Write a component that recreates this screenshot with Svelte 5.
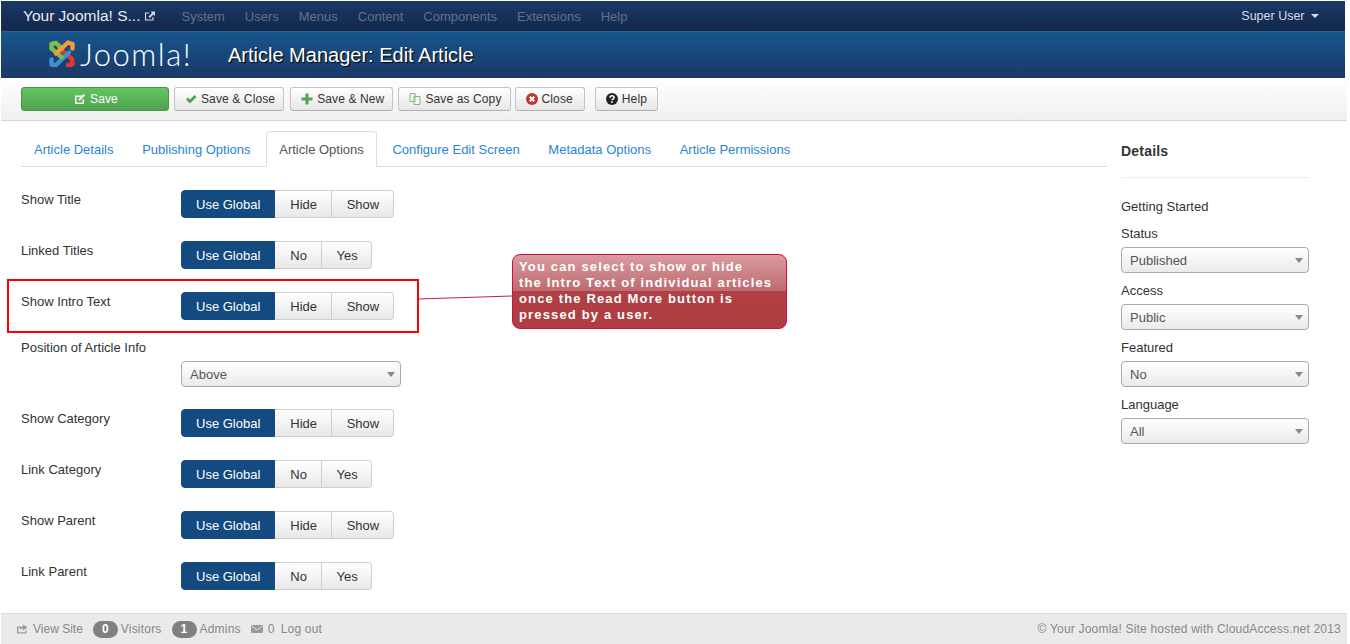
<script>
	const menus = ['System', 'Users', 'Menus', 'Content', 'Components', 'Extensions', 'Help'];
	const tabs = [
		'Article Details',
		'Publishing Options',
		'Article Options',
		'Configure Edit Screen',
		'Metadata Options',
		'Article Permissions'
	];
	const activeTab = 'Article Options';
	const hideShow = ['Hide', 'Show'];
	const noYes = ['No', 'Yes'];
	const rowsTop = [
		{ label: 'Show Title', options: hideShow },
		{ label: 'Linked Titles', options: noYes },
		{ label: 'Show Intro Text', options: hideShow }
	];
	const rowsBottom = [
		{ label: 'Show Category', options: hideShow },
		{ label: 'Link Category', options: noYes },
		{ label: 'Show Parent', options: hideShow },
		{ label: 'Link Parent', options: noYes }
	];
	const sideFields = [
		{ label: 'Status', value: 'Published' },
		{ label: 'Access', value: 'Public' },
		{ label: 'Featured', value: 'No' },
		{ label: 'Language', value: 'All' }
	];
</script>

{#snippet toggleRow(row)}
	<div class="row">
		<span class="row-label">{row.label}</span>
		<div class="btn-group">
			<span class="seg active">Use Global</span>
			{#each row.options as option}
				<span class="seg">{option}</span>
			{/each}
		</div>
	</div>
{/snippet}

<div class="page">
	<nav class="navbar">
		<span class="brand">Your Joomla! S...</span>
		<svg class="ext" viewBox="0 0 12 12" width="12" height="12">
			<path d="M9 7v3H1.500V3H5" fill="none" stroke="#d5dce6" stroke-width="1.100" />
			<path d="M6.500 1.500h4.500V6L9.400 4.500 5.800 8 4.500 6.700 8 3.100z" fill="#d5dce6" />
		</svg>
		<ul class="menu">
			{#each menus as item}
				<li>{item}</li>
			{/each}
		</ul>
		<span class="user">Super User <i class="caret"></i></span>
	</nav>

	<header class="header">
		<div class="logo">
			<svg viewBox="0 0 30 30" width="30" height="30">
				<g fill="none" stroke-width="4.400" stroke-linecap="round" stroke-linejoin="round">
					<path d="M25 25.500 21 26 M25.500 25 25 20 12 9" stroke="#e8352e" />
					<path d="M4.500 25.500 9 26 22 13.500 M4.500 25.500V20.500" stroke="#3f8fd2" />
					<path d="M4.500 5 9 4 15 9.500 M4.500 5V9.500L14.500 18" stroke="#7ac143" />
					<path d="M25.500 5 21 3.500 9 14.500 M25.500 5V9.500" stroke="#f59a3d" />
				</g>
			</svg>
			<span class="wordmark">Joomla!</span>
		</div>
		<h1>Article Manager: Edit Article</h1>
	</header>

	<div class="toolbar">
		<button class="btn save">
			<svg viewBox="0 0 12 12" width="12" height="12">
				<path d="M1 2.500h7L6.500 4H2.500v5.500h6V7L10 5.500V11H1z" fill="#fff" />
				<path d="M4.500 6 9.500 1 11 2.500 6 7.500H4.500z" fill="#fff" />
			</svg>
			Save
		</button>
		<button class="btn save-close">
			<svg viewBox="0 0 12 12" width="12" height="12">
				<path d="M1 6.500 3 4.500 5 6.500 9.500 2 11.500 4 5 10.500z" fill="#51a351" />
			</svg>
			Save &amp; Close
		</button>
		<button class="btn">
			<svg viewBox="0 0 12 12" width="12" height="12">
				<path d="M4.500 0.500h3v4h4v3h-4v4h-3v-4h-4v-3h4z" fill="#51a351" />
			</svg>
			Save &amp; New
		</button>
		<button class="btn save-copy">
			<svg viewBox="0 0 12 12" width="12" height="12">
				<path d="M1 .5h5v8H1zM5 3.500h6v8H5z" fill="#f4f4f4" stroke="#7fb97f" />
			</svg>
			Save as Copy
		</button>
		<button class="btn close">
			<svg viewBox="0 0 12 12" width="12" height="12">
				<circle cx="6" cy="6" r="6" fill="#bd362f" />
				<path d="M3.800 3.800 8.200 8.200M8.200 3.800 3.800 8.200" stroke="#fff" stroke-width="2" />
			</svg>
			Close
		</button>
		<button class="btn help">
			<svg viewBox="0 0 12 12" width="12" height="12">
				<circle cx="6" cy="6" r="6" fill="#222" />
				<path d="M4 4.700C4 2 8.100 2.200 8.100 4.500 8.100 6 6 6 6 7.200" fill="none" stroke="#fff" stroke-width="1.500" />
				<rect x="5.200" y="8.200" width="1.600" height="1.600" fill="#fff" />
			</svg>
			Help
		</button>
	</div>

	<main class="main">
		<section class="content">
			<ul class="tabs">
				{#each tabs as tab}
					<li class:active={tab === activeTab}>{tab}</li>
				{/each}
			</ul>

			{#each rowsTop as row}
				{@render toggleRow(row)}
			{/each}

			<div class="position">
				<span class="row-label">Position of Article Info</span>
				<div class="select wide">Above<i class="arrow"></i></div>
			</div>

			{#each rowsBottom as row}
				{@render toggleRow(row)}
			{/each}
		</section>

		<aside class="sidebar">
			<h4>Details</h4>
			<hr />
			<div class="plain">Getting Started</div>
			{#each sideFields as field}
				<div class="side-label">{field.label}</div>
				<div class="select">{field.value}<i class="arrow"></i></div>
			{/each}
		</aside>

		<div class="highlight"></div>
		<svg class="connector" width="96" height="8" viewBox="0 0 96 8">
			<line x1="0" y1="5" x2="94" y2="2" stroke="#d0194a" stroke-width="1" />
		</svg>
		<div class="callout">
			You can select to show or hide<br />
			the Intro Text of individual articles<br />
			once the Read More button is<br />
			pressed by a user.
		</div>
	</main>

	<footer class="footer">
		<svg viewBox="0 0 12 12" width="12" height="12">
			<path d="M1 3.500h4v1.300H2.300v4.400h7V7.500h1.300V10.500H1z" fill="#999" />
			<path d="M7 1.500 11.500 4.500 7 7.500V5.500C5.500 5.500 4.500 6 4 7 4 4.500 5 3.500 7 3.500z" fill="#999" />
		</svg>
		<span class="view-site">View Site</span>
		<span class="badge">0</span>
		<span>Visitors</span>
		<span class="badge">1</span>
		<span>Admins</span>
		<svg class="mail" viewBox="0 0 12 10" width="12" height="10">
			<rect y="1" width="12" height="8" rx="1" fill="#999" />
			<path d="M.5 2 6 6l5.500-4" fill="none" stroke="#e6e6e6" />
		</svg>
		<span class="mail-count">0</span>
		<span>Log out</span>
		<span class="copyright">© Your Joomla! Site hosted with CloudAccess.net 2013</span>
	</footer>
</div>

<style>
	:global(body) {
		margin: 0;
		background: #fff;
	}

	.page {
		box-sizing: border-box;
		height: 644px;
		padding: 1px 3px 0 1px;
		display: flex;
		flex-direction: column;
		overflow: hidden;
		font-family: 'Liberation Sans', Arial, sans-serif;
		font-size: 13px;
		color: #333;
	}

	.navbar {
		flex: none;
		height: 30px;
		display: flex;
		align-items: center;
		padding: 0 26px 0 22px;
		margin-right: 2px;
		background: linear-gradient(#1a3867, #142849);
		box-sizing: border-box;
	}

	.brand {
		color: #e8edf3;
		font-size: 15.500px;
	}

	.ext {
		margin-left: 4px;
	}

	.menu {
		list-style: none;
		display: flex;
		gap: 20px;
		margin: 0 0 0 25px;
		padding: 0;
		color: #5f7389;
		font-size: 13px;
	}

	.user {
		margin-left: auto;
		color: #d5dce6;
		font-size: 12.500px;
	}

	.caret {
		display: inline-block;
		margin-left: 3px;
		vertical-align: 2px;
		border-left: 4px solid transparent;
		border-right: 4px solid transparent;
		border-top: 4px solid #d5dce6;
	}

	.header {
		flex: none;
		height: 47px;
		margin-right: 2px;
		display: flex;
		align-items: center;
		background: linear-gradient(#17568c, #1a3867);
		border-top: 1px solid #2a6496;
		box-sizing: border-box;
	}

	.logo {
		display: flex;
		align-items: center;
		margin-left: 46px;
		margin-top: -3px;
		width: 181px;
	}

	.wordmark {
		margin-left: 3px;
		color: #fff;
		font-family: Lato, 'Noto Sans', sans-serif;
		font-weight: 300;
		font-size: 31px;
		line-height: 30px;
		letter-spacing: 1.500px;
	}

	h1 {
		margin: 0;
		color: #fff;
		font-size: 20px;
		font-weight: normal;
		text-shadow: 1px 1px 1px #000;
	}

	.toolbar {
		flex: none;
		height: 43px;
		box-sizing: border-box;
		display: flex;
		align-items: flex-start;
		padding: 9px 0 0 20px;
		gap: 5px;
		background: linear-gradient(#fff, #f0f0f0);
		border-bottom: 1px solid #d6d6d6;
	}

	.btn {
		height: 24px;
		box-sizing: border-box;
		display: flex;
		align-items: center;
		gap: 4px;
		padding: 0 8px 0 10px;
		font: inherit;
		font-size: 12px;
		letter-spacing: 0.12px;
		color: #333;
		background: linear-gradient(#fff, #e6e6e6);
		border: 1px solid #c4c4c4;
		border-bottom-color: #b0b0b0;
		border-radius: 3px;
	}

	.btn.save {
		width: 148px;
		justify-content: center;
		color: #fff;
		background: linear-gradient(#62c462, #51a351);
		border-color: #4a944a;
	}

	.btn.save-close {
		margin-right: 1px;
	}

	.btn.save-copy {
		margin-right: -1px;
	}

	.btn.close {
		padding-right: 11px;
	}

	.btn.help {
		margin-left: 5px;
		padding-right: 10px;
	}

	.main {
		position: relative;
		flex: 1;
		min-height: 0;
		display: flex;
	}

	.content {
		width: 1086px;
		margin-left: 20px;
		flex: none;
	}

	.tabs {
		list-style: none;
		display: flex;
		height: 36px;
		box-sizing: border-box;
		margin: 10px 0 23px;
		padding: 0;
		border-bottom: 1px solid #ddd;
		color: #2a85d4;
	}

	.tabs li {
		padding: 0 13px;
		margin-right: 2.700px;
		line-height: 38px;
		height: 35px;
	}

	.tabs li.active {
		color: #555;
		background: #fff;
		height: 36px;
		box-sizing: border-box;
		border: 1px solid #ddd;
		border-bottom-color: #fff;
		border-radius: 4px 4px 0 0;
		line-height: 36px;
		padding: 0 12px;
	}

	.row {
		display: flex;
		height: 51px;
		box-sizing: border-box;
	}

	.row-label {
		display: block;
		width: 160px;
		flex: none;
		padding-top: 3px;
		line-height: 14px;
	}

	.btn-group {
		display: flex;
		height: 28px;
	}

	.seg {
		display: block;
		box-sizing: border-box;
		padding: 0 13.600px 0 15px;
		line-height: 27px;
		background: linear-gradient(#fff, #e8e8e8);
		border: 1px solid #cfcfcf;
		border-left-width: 0;
	}

	.seg:last-child {
		border-radius: 0 4px 4px 0;
	}

	.seg.active {
		padding: 0 14px;
		color: #fff;
		background: #134a80;
		border: 1px solid #134a80;
		border-radius: 4px 0 0 4px;
	}

	.position {
		height: 70px;
		margin-top: -4px;
	}

	.position .row-label {
		width: auto;
		padding-top: 2px;
	}

	.select {
		position: relative;
		width: 188px;
		height: 26px;
		box-sizing: border-box;
		padding: 0 8px;
		line-height: 26px;
		color: #555;
		background: linear-gradient(#fff, #eaeaea);
		border: 1px solid #aaa;
		border-radius: 4px;
	}

	.select.wide {
		width: 220px;
		margin: 6px 0 0 160px;
	}

	.arrow {
		position: absolute;
		right: 5px;
		top: 10px;
		border-left: 4px solid transparent;
		border-right: 4px solid transparent;
		border-top: 5px solid #888;
	}

	.sidebar {
		margin-left: 14px;
		width: 188px;
		flex: none;
	}

	.sidebar h4 {
		margin: 22px 0 0;
		font-size: 14px;
		line-height: 16px;
		color: #333;
		letter-spacing: 0.2px;
	}

	.sidebar hr {
		margin: 18px 0 21px;
		border: 0;
		border-top: 1px solid #eee;
	}

	.plain {
		line-height: 16px;
	}

	.side-label {
		margin: 10px 0 5px;
		line-height: 16px;
	}

	.plain + .side-label {
		margin-top: 11px;
	}

	.highlight {
		position: absolute;
		left: 6px;
		top: 158px;
		width: 412px;
		height: 54px;
		box-sizing: border-box;
		border: 2px solid #f00;
	}

	.connector {
		position: absolute;
		left: 417px;
		top: 173px;
	}

	.callout {
		position: absolute;
		left: 511px;
		top: 133px;
		width: 275px;
		height: 75px;
		box-sizing: border-box;
		padding: 4px 6px;
		color: #fff;
		font-size: 13px;
		font-weight: bold;
		line-height: 16px;
		letter-spacing: 1.150px;
		white-space: nowrap;
		background: linear-gradient(#d99ba0, #bd6a6f 50%, #b04044 50%, #ae3e42);
		border: 1px solid #cc1040;
		border-radius: 8px;
	}

	.footer {
		flex: none;
		height: 31px;
		box-sizing: border-box;
		display: flex;
		align-items: center;
		padding: 0 6px 0 15px;
		background: #eaeaea;
		border-top: 1px solid #ddd;
		color: #888;
		font-size: 12px;
		letter-spacing: 0.2px;
	}

	.view-site {
		margin-left: 5px;
		letter-spacing: 0;
	}

	.badge {
		width: 25px;
		height: 17px;
		margin: 0 3px 0 10px;
		border-radius: 9px;
		background: #808080;
		color: #fff;
		font-weight: bold;
		line-height: 17px;
		text-align: center;
	}

	.mail {
		margin: 0 5px 0 10px;
	}

	.mail-count {
		margin-right: 6px;
	}

	.copyright {
		margin-left: auto;
	}
</style>
